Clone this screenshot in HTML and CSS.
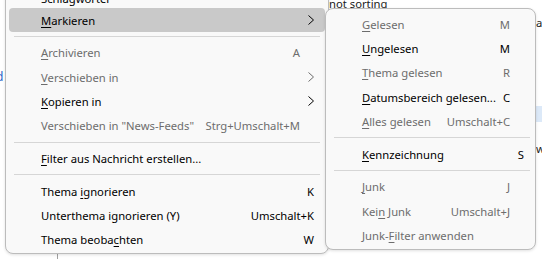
FILE: index.html
```html
<!DOCTYPE html>
<html lang="de">
<head>
<meta charset="utf-8">
<link rel="stylesheet" href="styles.css">
</head>
<body>
<div class="backdrop">
  <span class="frag frag-top">not sorting</span>
  <span class="frag frag-d">d</span>
  <span class="frag frag-a">a</span>
  <span class="frag frag-w">w</span>
  <span class="frag frag-sel"></span>
  <span class="frag frag-line"></span>
</div>

<div class="menu main">
  <div class="item first"><span class="label">Schlagwörter</span></div>
  <div class="item active"><span class="label"><u>M</u>arkieren</span><span class="col"><svg class="arrow" width="6" height="10" viewBox="0 0 6 10"><polyline points="0.5,0.5 5.5,5 0.5,9.5"/></svg></span></div>
  <div class="sep"></div>
  <div class="item off"><span class="label"><u>A</u>rchivieren</span><span class="accel">A</span><span class="col"></span></div>
  <div class="item off"><span class="label"><u>V</u>erschieben in</span><span class="col"><svg class="arrow" width="6" height="10" viewBox="0 0 6 10"><polyline points="0.5,0.5 5.5,5 0.5,9.5"/></svg></span></div>
  <div class="item"><span class="label"><u>K</u>opieren in</span><span class="col"><svg class="arrow" width="6" height="10" viewBox="0 0 6 10"><polyline points="0.5,0.5 5.5,5 0.5,9.5"/></svg></span></div>
  <div class="item off"><span class="label">Verschieben in "News-Feeds"</span><span class="accel">Strg+Umschalt+M</span><span class="col"></span></div>
  <div class="sep"></div>
  <div class="item"><span class="label"><u>F</u>ilter aus Nachricht erstellen...</span></div>
  <div class="sep"></div>
  <div class="item"><span class="label">Thema <u>i</u>gnorieren</span><span class="accel">K</span></div>
  <div class="item"><span class="label">Unterthema ignorieren (Y)</span><span class="accel">Umschalt+K</span></div>
  <div class="item"><span class="label">Thema beoba<u>c</u>hten</span><span class="accel">W</span></div>
</div>

<div class="menu sub">
  <div class="item off"><span class="label"><u>G</u>elesen</span><span class="accel">M</span><span class="col"></span></div>
  <div class="item"><span class="label"><u>U</u>ngelesen</span><span class="accel">M</span><span class="col"></span></div>
  <div class="item off"><span class="label"><u>T</u>hema gelesen</span><span class="accel">R</span><span class="col"></span></div>
  <div class="item"><span class="label"><u>D</u>atumsbereich gelesen...</span><span class="accel">C</span><span class="col"></span></div>
  <div class="item off"><span class="label"><u>A</u>lles gelesen</span><span class="accel">Umschalt+C</span><span class="col"></span></div>
  <div class="sep"></div>
  <div class="item"><span class="label"><u>K</u>ennzeichnung</span><span class="accel">S</span></div>
  <div class="sep"></div>
  <div class="item off"><span class="label"><u>J</u>unk</span><span class="accel">J</span><span class="col"></span></div>
  <div class="item off"><span class="label">Kei<u>n</u> Junk</span><span class="accel">Umschalt+J</span><span class="col"></span></div>
  <div class="item off"><span class="label">Junk-<u>F</u>ilter anwenden</span><span class="col"></span></div>
</div>
</body>
</html>
```

FILE: styles.css
```css
html, body {
  margin: 0;
  padding: 0;
  background: #ffffff;
  width: 542px;
  height: 259px;
  overflow: hidden;
  font-family: "Noto Sans", "Open Sans", sans-serif;
  font-size: 11.25px;
}

.backdrop {
  position: relative;
  width: 542px;
  height: 259px;
}

.frag {
  position: absolute;
  color: #1a1a1a;
  line-height: 14px;
}

.frag-top {
  left: 329px;
  top: -3px;
  text-decoration: underline;
}

.frag-d {
  left: -4px;
  top: 70px;
  color: #2a62c8;
  font-size: 12px;
}

.frag-a {
  left: 536px;
  top: 16px;
}

.frag-w {
  left: 536px;
  top: 142px;
}

.frag-sel {
  left: 536px;
  top: 106px;
  width: 6px;
  height: 16px;
  background: #dce9f8;
}

.frag-line {
  left: 57px;
  top: 254px;
  width: 1px;
  height: 5px;
  background: #a0a0a0;
}

.menu {
  position: absolute;
  box-sizing: border-box;
  background: #f9f9f9;
  border: 1px solid #bcbcbc;
  border-radius: 8px;
  box-shadow: 0 1px 3px rgba(0, 0, 0, 0.12);
  display: flex;
  flex-direction: column;
}

.main {
  left: 5px;
  top: -20.33px;
  width: 324px;
  padding: 3px 3px 1px 3px;
}

.sub {
  left: 325px;
  top: 8px;
  width: 211px;
  padding: 3px 3px 1px 3px;
}

.item {
  height: 24.33px;
  flex: none;
  display: flex;
  align-items: center;
  border-radius: 4px;
  color: #000000;
  white-space: nowrap;
}

.main .item {
  padding: 0 11px 0 32px;
}

.main .item.first {
  padding-top: 6px;
  box-sizing: border-box;
}

.sub .item {
  padding: 0 8px 0 33px;
}

.item.active {
  background: #c9c9c9;
}

.item.off {
  color: #6d6d6d;
}

.label {
  flex: 1;
}

.accel {
  flex: none;
}

.col {
  flex: none;
  width: 14px;
  display: flex;
  justify-content: flex-end;
  align-items: center;
}

.arrow {
  display: block;
  fill: none;
  stroke: currentColor;
  stroke-width: 1;
}

u {
  text-decoration: underline;
  text-underline-offset: 1.5px;
}

.sep {
  height: 8.33px;
  flex: none;
  display: flex;
  align-items: center;
}

.sep::before {
  content: "";
  display: block;
  height: 1px;
  flex: 1;
  background: #d6d6d6;
}

.main .sep {
  padding: 0 5px;
}

.sub .sep {
  padding: 0 2px 0 5px;
}
```
